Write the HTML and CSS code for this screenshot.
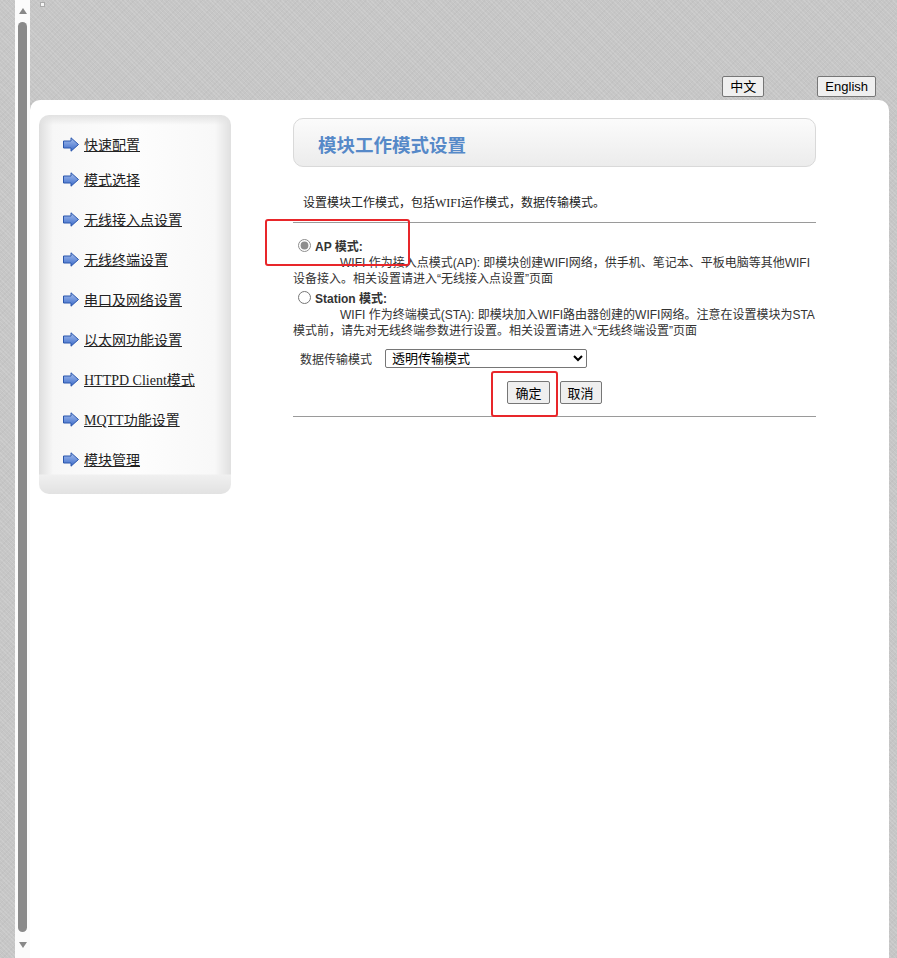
FILE: index.html
```html
<!DOCTYPE html>
<html lang="zh-CN">
<head>
  <meta charset="UTF-8">
  <meta name="viewport" content="width=device-width, initial-scale=1.0">
  <title>模块工作模式设置</title>
  <link rel="stylesheet" href="styles.css">
</head>
<body>

<div class="frame">
  <div class="scrollbar">
    <span class="sb-arrow sb-up"></span>
    <span class="sb-thumb"></span>
    <span class="sb-arrow sb-down"></span>
  </div>

  <div class="page">
    <div class="topbar">
      <span class="broken-img"></span>
      <div class="lang">
        <button class="lang-btn">中文</button>
        <button class="lang-btn">English</button>
      </div>
    </div>

    <div class="panel">
      <div class="sidebar">
        <svg width="0" height="0" class="defs"><defs><linearGradient id="ag" x1="0" y1="0" x2="0" y2="1"><stop offset="0" stop-color="#a7c0ef"/><stop offset="1" stop-color="#3a69c8"/></linearGradient></defs></svg>
        <ul class="menu">
          <li><span class="arrow"><svg width="16" height="15" viewBox="0 0 16 15"><path d="M0.5 4H8V0.8L15.5 7.5L8 14.2V11H0.5Z" fill="url(#ag)" stroke="#2a56ad"/></svg></span><a href="#">快速配置</a></li>
          <li><span class="arrow"><svg width="16" height="15" viewBox="0 0 16 15"><path d="M0.5 4H8V0.8L15.5 7.5L8 14.2V11H0.5Z" fill="url(#ag)" stroke="#2a56ad"/></svg></span><a href="#">模式选择</a></li>
          <li><span class="arrow"><svg width="16" height="15" viewBox="0 0 16 15"><path d="M0.5 4H8V0.8L15.5 7.5L8 14.2V11H0.5Z" fill="url(#ag)" stroke="#2a56ad"/></svg></span><a href="#">无线接入点设置</a></li>
          <li><span class="arrow"><svg width="16" height="15" viewBox="0 0 16 15"><path d="M0.5 4H8V0.8L15.5 7.5L8 14.2V11H0.5Z" fill="url(#ag)" stroke="#2a56ad"/></svg></span><a href="#">无线终端设置</a></li>
          <li><span class="arrow"><svg width="16" height="15" viewBox="0 0 16 15"><path d="M0.5 4H8V0.8L15.5 7.5L8 14.2V11H0.5Z" fill="url(#ag)" stroke="#2a56ad"/></svg></span><a href="#">串口及网络设置</a></li>
          <li><span class="arrow"><svg width="16" height="15" viewBox="0 0 16 15"><path d="M0.5 4H8V0.8L15.5 7.5L8 14.2V11H0.5Z" fill="url(#ag)" stroke="#2a56ad"/></svg></span><a href="#">以太网功能设置</a></li>
          <li><span class="arrow"><svg width="16" height="15" viewBox="0 0 16 15"><path d="M0.5 4H8V0.8L15.5 7.5L8 14.2V11H0.5Z" fill="url(#ag)" stroke="#2a56ad"/></svg></span><a href="#">HTTPD Client模式</a></li>
          <li><span class="arrow"><svg width="16" height="15" viewBox="0 0 16 15"><path d="M0.5 4H8V0.8L15.5 7.5L8 14.2V11H0.5Z" fill="url(#ag)" stroke="#2a56ad"/></svg></span><a href="#">MQTT功能设置</a></li>
          <li><span class="arrow"><svg width="16" height="15" viewBox="0 0 16 15"><path d="M0.5 4H8V0.8L15.5 7.5L8 14.2V11H0.5Z" fill="url(#ag)" stroke="#2a56ad"/></svg></span><a href="#">模块管理</a></li>
        </ul>
      </div>

      <div class="content">
        <div class="title-box"><h2>模块工作模式设置</h2></div>
        <p class="intro">设置模块工作模式，包括WIFI运作模式，数据传输模式。</p>
        <hr class="line">

        <div class="mode">
          <label class="mode-label"><input type="radio" name="mode" checked> AP 模式:</label>
          <p class="mode-desc">WIFI 作为接入点模式(AP): 即模块创建WIFI网络，供手机、笔记本、平板电脑等其他WIFI设备接入。相关设置请进入“无线接入点设置”页面</p>
        </div>
        <div class="mode mode-sta">
          <label class="mode-label"><input type="radio" name="mode"> Station 模式:</label>
          <p class="mode-desc">WIFI 作为终端模式(STA): 即模块加入WIFI路由器创建的WIFI网络。注意在设置模块为STA模式前，请先对无线终端参数进行设置。相关设置请进入“无线终端设置”页面</p>
        </div>

        <div class="data-row">
          <span class="data-label">数据传输模式</span>
          <select class="data-select">
            <option>透明传输模式</option>
            <option>协议传输模式</option>
          </select>
        </div>

        <div class="actions">
          <button class="act-btn">确定</button>
          <button class="act-btn">取消</button>
        </div>
        <hr class="line line-bottom">

        <!-- annotation marks -->
        <div class="mark mark-ap"></div>
        <div class="mark mark-ok"></div>
      </div>
    </div>
  </div>
</div>

</body>
</html>
```

FILE: styles.css
```css
html, body { margin: 0; height: 100%; overflow: hidden; }
body {
  font-family: "Liberation Sans", "Noto Sans CJK SC", sans-serif;
  font-size: 12px;
  color: #333;
  background-color: #c6c6c6;
  background-image:
    repeating-linear-gradient(45deg, rgba(255,255,255,0.12) 0 1px, transparent 1px 3px),
    repeating-linear-gradient(-45deg, rgba(0,0,0,0.025) 0 1px, transparent 1px 4px);
}

.frame { display: flex; height: 100%; }

/* fake frame scrollbar */
.scrollbar { width: 15px; margin-left: 15px; background: #fbfbfb; display: flex; flex-direction: column; align-items: center; }
.sb-arrow { width: 0; height: 0; border-left: 4.5px solid transparent; border-right: 4.5px solid transparent; }
.sb-up { margin-top: 8px; border-bottom: 6px solid #888; }
.sb-down { margin-top: 10px; border-top: 6px solid #888; }
.sb-thumb { width: 9px; margin-top: 8px; flex: 1; background: #8a8a8a; border-radius: 5px; max-height: 910px; }

.page { flex: 1; display: flex; flex-direction: column; padding-right: 8px; }

.topbar { height: 100px; display: flex; justify-content: space-between; align-items: flex-end; box-sizing: border-box; padding-bottom: 3px; }
.broken-img { align-self: flex-start; width: 3px; height: 3px; margin: 2px 0 0 10px; background: #f4f4f4; border: 1px solid #aaa; }
.lang { display: flex; gap: 53px; margin-right: 13px; }
.lang-btn { font-family: "Liberation Sans", "Noto Sans CJK SC", sans-serif; font-size: 13px; height: 21px; padding: 0 7px; color: #000; background: #efefef; border: 1px solid #767676; border-radius: 2px; line-height: 19px; }

.panel { flex: 1; background: #fff; border-radius: 10px 10px 0 0; display: flex; align-items: flex-start; padding: 15px 0 0 9px; }

/* left menu */
.defs { position: absolute; }
.sidebar {
  width: 192px; height: 379px; box-sizing: border-box; border-radius: 10px;
  background:
    linear-gradient(to bottom, rgba(0,0,0,0) 359px, #f0f0f0 360px, #e2e2e2 379px),
    linear-gradient(to bottom, #e2e2e2 0, rgba(255,255,255,0) 10px),
    linear-gradient(to right, #dedede 0, #f7f7f7 14px, #fdfdfd 50%, #f8f8f8 176px, #e0e0e0 192px);
}
.menu { list-style: none; margin: 0; padding: 14px 0 0 24px; }
.menu li { height: 40px; display: flex; align-items: center; }
.menu li:first-child { height: 30px; }
.arrow { width: 16px; height: 15px; margin-right: 5px; display: flex; }
.menu a { font-family: "Liberation Serif", "Noto Sans CJK SC", serif; font-size: 14px; color: #222; text-decoration: underline; }

/* main column */
.content { width: 523px; margin: 3px 0 0 62px; position: relative; }
.title-box { height: 49px; box-sizing: border-box; border: 1px solid #d9d9d9; border-radius: 10px; background: linear-gradient(to bottom, #fbfbfb, #ececec); display: flex; align-items: center; padding: 3px 0 0 24px; }
.title-box h2 { margin: 0; font-family: "Noto Sans CJK SC", sans-serif; font-size: 18.5px; font-weight: bold; color: #5689c8; }

.intro { margin: 27px 0 0 10px; line-height: 18px; font-family: "Liberation Serif", "Noto Sans CJK SC", serif; color: #222; }
.line { margin: 10px 0 0; border: 0; border-top: 1px solid #9a9a9a; }

.mode { margin-top: 13px; }
.mode-sta { margin-top: 1px; }
.mode-label { display: flex; align-items: center; height: 18px; margin-left: 4px; font-weight: bold; color: #333; }
.mode-label input { margin: 0 4px 0 1px; width: 13px; height: 13px; accent-color: #8d8d8d; }
.mode-desc { margin: 1px 0 0; line-height: 16px; text-indent: 47px; color: #333; }

.data-row { display: flex; align-items: center; margin: 9px 0 0 7px; height: 20px; }
.data-label { width: 85px; color: #333; }
.data-select { width: 202px; height: 19px; font-size: 13px; font-family: "Liberation Sans", "Noto Sans CJK SC", sans-serif; border: 1px solid #767676; border-radius: 2px; background: #fff; color: #000; padding: 0 2px; }

.actions { display: flex; justify-content: center; gap: 10px; margin-top: 13px; }
.act-btn { font-family: "Noto Sans CJK SC", sans-serif; font-size: 13px; height: 23px; padding: 0 7px; background: #efefef; border: 1px solid #767676; border-radius: 2px; color: #000; line-height: 21px; }
.line-bottom { margin-top: 12px; }

/* red annotation boxes */
.mark { position: absolute; border: 2.5px solid #e8262a; border-radius: 3px; box-sizing: border-box; }
.mark-ap { left: -28px; top: 101px; width: 145px; height: 47px; }
.mark-ok { left: 198px; top: 253px; width: 67px; height: 46px; }
```
